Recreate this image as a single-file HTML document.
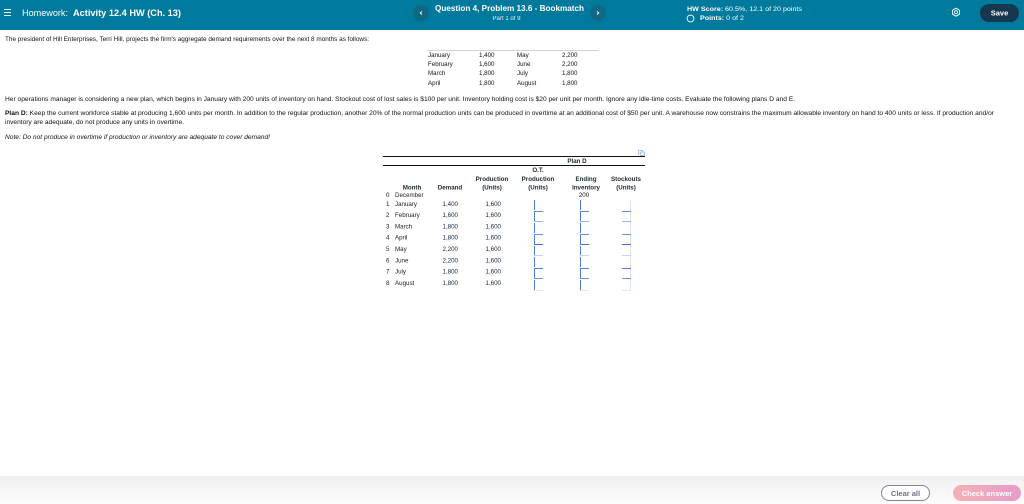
<!DOCTYPE html>
<html lang="en"><head><meta charset="utf-8"><title>Homework</title>
<style>
html,body{margin:0;padding:0;width:1024px;height:504px;overflow:hidden;background:#fff}
svg{display:block;position:absolute;left:0;top:0}
text{font-family:"Liberation Sans",Arial,sans-serif;fill:#111;filter:blur(.25px)}
.w{fill:#fff}.b{font-weight:700}
.s{font-size:6.2px}.t{font-size:6.2px}
.m{text-anchor:middle}.r{text-anchor:end}
.h{font-size:6.2px;font-weight:700;fill:#1c2830;text-anchor:middle}
.c{font-size:6.2px;fill:#222}
.n{font-size:6.2px;fill:#14253f;text-anchor:end}
</style></head><body>
<svg width="1024" height="504" viewBox="0 0 1024 504" xmlns="http://www.w3.org/2000/svg">
<defs>
<linearGradient id="ft" x1="0" y1="0" x2="0" y2="1"><stop offset="0" stop-color="#f1f1f1"/><stop offset="1" stop-color="#fcfcfc"/></linearGradient>
<linearGradient id="ck" x1="0" y1="0" x2="1" y2="0"><stop offset="0" stop-color="#f6b1b4"/><stop offset="1" stop-color="#e79cc9"/></linearGradient>
</defs>
<!-- header -->
<rect width="1024" height="30" fill="#007a9c"/>
<rect x="4" y="9" width="7" height="1" fill="#e3f0f4"/><rect x="4" y="12" width="7" height="1" fill="#e3f0f4"/><rect x="4" y="15" width="7" height="1" fill="#e3f0f4"/>
<text class="w" x="22" y="16" font-size="9" textLength="46" lengthAdjust="spacingAndGlyphs">Homework:</text>
<text class="w b" x="73" y="16" font-size="9" textLength="108" lengthAdjust="spacingAndGlyphs">Activity 12.4 HW (Ch. 13)</text>
<circle cx="421" cy="13" r="8" fill="#0f6886"/><circle cx="598" cy="13" r="8" fill="#0f6886"/>
<path d="M422 11.5L420.2 13L422 14.5" fill="none" stroke="#fff" stroke-width=".9"/>
<path d="M597 11.5L598.8 13L597 14.5" fill="none" stroke="#fff" stroke-width=".9"/>
<text class="w b" x="435" y="11" font-size="7.8" textLength="149" lengthAdjust="spacingAndGlyphs">Question 4, Problem 13.6 - Bookmatch</text>
<text class="w" x="492.500" y="20" font-size="6" textLength="28" lengthAdjust="spacingAndGlyphs" fill-opacity=".9">Part 1 of 9</text>
<text class="w" x="687" y="11" font-size="6.600" textLength="115" lengthAdjust="spacingAndGlyphs"><tspan class="b">HW Score:</tspan> 60.5%, 12.1 of 20 points</text>
<circle cx="690.500" cy="18.500" r="3.400" fill="none" stroke="#fff" stroke-width=".9"/>
<text class="w" x="700" y="20" font-size="6.600" textLength="44" lengthAdjust="spacingAndGlyphs"><tspan class="b">Points:</tspan> 0 of 2</text>
<path d="M956 8.200L959.500 10.200V14.200L956 16.200L952.500 14.200V10.200Z" fill="none" stroke="#fff" stroke-width=".9"/><circle cx="956" cy="12.200" r="1.500" fill="none" stroke="#fff" stroke-width=".8"/>
<rect x="980" y="4" width="39" height="18" rx="9" fill="#16384f"/>
<text class="w b m" x="999.500" y="15.500" font-size="7.500">Save</text>
<!-- intro -->
<text class="s" x="5" y="41" textLength="364" lengthAdjust="spacingAndGlyphs">The president of Hill Enterprises, Terri Hill, projects the firm's aggregate demand requirements over the next 8 months as follows:</text>
<rect x="427" y="50" width="172" height="1" fill="#d4d4d4"/>
<text class="t" x="428" y="57">January</text><text class="t" x="479" y="57">1,400</text><text class="t" x="517" y="57">May</text><text class="t" x="562" y="57">2,200</text>
<text class="t" x="428" y="66">February</text><text class="t" x="479" y="66">1,600</text><text class="t" x="517" y="66">June</text><text class="t" x="562" y="66">2,200</text>
<text class="t" x="428" y="75">March</text><text class="t" x="479" y="75">1,800</text><text class="t" x="517" y="75">July</text><text class="t" x="562" y="75">1,800</text>
<text class="t" x="428" y="85">April</text><text class="t" x="479" y="85">1,800</text><text class="t" x="517" y="85">August</text><text class="t" x="562" y="85">1,800</text>
<text class="s" x="5" y="101" textLength="790" lengthAdjust="spacingAndGlyphs">Her operations manager is considering a new plan, which begins in January with 200 units of inventory on hand. Stockout cost of lost sales is $100 per unit. Inventory holding cost is $20 per unit per month. Ignore any idle-time costs. Evaluate the following plans D and E.</text>
<text class="s" x="5" y="115" textLength="989" lengthAdjust="spacingAndGlyphs"><tspan class="b">Plan D:</tspan> Keep the current workforce stable at producing 1,600 units per month. In addition to the regular production, another 20% of the normal production units can be produced in overtime at an additional cost of $50 per unit. A warehouse now constrains the maximum allowable inventory on hand to 400 units or less. If production and/or</text>
<text class="s" x="5" y="124" textLength="179" lengthAdjust="spacingAndGlyphs">inventory are adequate, do not produce any units in overtime.</text>
<text class="s" x="5" y="139" font-style="italic" textLength="265" lengthAdjust="spacingAndGlyphs">Note: Do not produce in overtime if production or inventory are adequate to cover demand!</text>
<!-- copy icon -->
<rect x="638.500" y="150.500" width="4" height="3.500" fill="none" stroke="#8fb0d0" stroke-width=".7"/><rect x="640.500" y="152" width="4" height="3.500" fill="#fff" stroke="#8fb0d0" stroke-width=".7"/>
<!-- table -->
<rect x="383" y="156" width="262" height="1" fill="#111"/>
<rect x="383" y="165" width="262" height="1" fill="#111"/>
<text class="h" x="577" y="163">Plan D</text>
<text class="h" x="538" y="172">O.T.</text>
<text class="h" x="492" y="181">Production</text><text class="h" x="538" y="181">Production</text><text class="h" x="586" y="181">Ending</text><text class="h" x="626" y="181">Stockouts</text>
<text class="h" x="412" y="189.500">Month</text><text class="h" x="450" y="189.500">Demand</text><text class="h" x="492" y="189.500">(Units)</text><text class="h" x="538" y="189.500">(Units)</text><text class="h" x="586" y="189.500">Inventory</text><text class="h" x="626" y="189.500">(Units)</text>
<text class="c" x="386" y="197">0</text><text class="c" x="395" y="197">December</text><text class="c m" x="584" y="197">200</text>
<text class="c" x="386" y="206">1</text><text class="c" x="395" y="206">January</text><text class="n" x="458" y="206">1,400</text><text class="n" x="501" y="206">1,600</text>
<text class="c" x="386" y="217">2</text><text class="c" x="395" y="217">February</text><text class="n" x="458" y="217">1,600</text><text class="n" x="501" y="217">1,600</text>
<text class="c" x="386" y="228.500">3</text><text class="c" x="395" y="228.500">March</text><text class="n" x="458" y="228.500">1,800</text><text class="n" x="501" y="228.500">1,600</text>
<text class="c" x="386" y="239.500">4</text><text class="c" x="395" y="239.500">April</text><text class="n" x="458" y="239.500">1,800</text><text class="n" x="501" y="239.500">1,600</text>
<text class="c" x="386" y="251">5</text><text class="c" x="395" y="251">May</text><text class="n" x="458" y="251">2,200</text><text class="n" x="501" y="251">1,600</text>
<text class="c" x="386" y="262.500">6</text><text class="c" x="395" y="262.500">June</text><text class="n" x="458" y="262.500">2,200</text><text class="n" x="501" y="262.500">1,600</text>
<text class="c" x="386" y="273.500">7</text><text class="c" x="395" y="273.500">July</text><text class="n" x="458" y="273.500">1,800</text><text class="n" x="501" y="273.500">1,600</text>
<text class="c" x="386" y="285">8</text><text class="c" x="395" y="285">August</text><text class="n" x="458" y="285">1,800</text><text class="n" x="501" y="285">1,600</text>
<!-- input cell fragments -->
<defs>
<g id="tops">
<rect x="0" y="211" width="9" height="1" fill="#5f8ade"/><rect x="0" y="221" width="9" height="1" fill="#9db8e8"/>
<rect x="0" y="234" width="9" height="1" fill="#6a92de"/><rect x="0" y="244" width="9" height="1" fill="#3f6fd0"/>
<rect x="0" y="255" width="9" height="1" fill="#c5d3ee"/>
<rect x="0" y="268" width="9" height="1" fill="#4f7cd6"/><rect x="0" y="278" width="9" height="1" fill="#6a92de"/>
<rect x="0" y="290" width="9" height="1" fill="#dfe6f5"/>
</g>
<g id="cells">
<path d="M.5 200V210M.5 211V222M.5 223V233M.5 234V245M.5 246V256M.5 257V267M.5 268V279M.5 280V291" stroke="#4f7ed6" stroke-width="1" fill="none"/>
<use href="#tops"/>
</g></defs>
<use href="#cells" x="534"/><use href="#cells" x="580"/>
<!-- column 3 -->
<path d="M630.500 200V291" stroke="#dde4f2" stroke-width="1" fill="none"/>
<use href="#tops" x="622"/>
<!-- footer -->
<rect x="0" y="476" width="1024" height="28" fill="url(#ft)"/>
<rect x="881.500" y="485.500" width="48" height="15" rx="7.500" fill="#fff" stroke="#7d8594" stroke-width="1"/>
<text class="b m" x="905.500" y="496" font-size="7.500" style="fill:#6d7480">Clear all</text>
<rect x="953" y="485" width="68" height="16" rx="8" fill="url(#ck)"/>
<text class="w b m" x="987" y="496" font-size="7.500">Check answer</text>
</svg>
</body></html>
